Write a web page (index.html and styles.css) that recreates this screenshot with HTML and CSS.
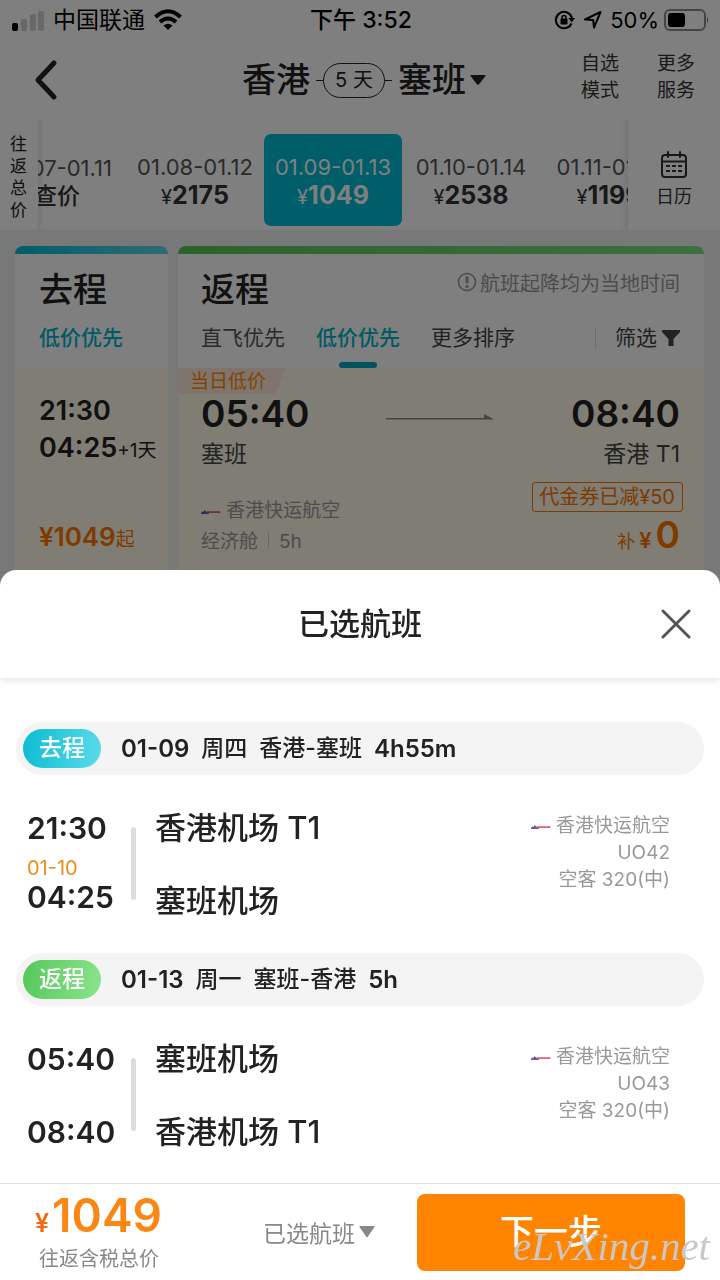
FILE: index.html
```html
<!DOCTYPE html>
<html lang="zh-CN">
<head>
<meta charset="utf-8">
<meta name="viewport" content="width=device-width, initial-scale=1">
<title>香港-塞班 航班</title>
<link rel="stylesheet" href="styles.css">
</head>
<body>
<svg class="defs" aria-hidden="true">
  <symbol id="airline" viewBox="0 0 20 8">
    <path d="M0 5.500 L1 3.500 L2.500 4 L3.500 2 L5 3.500 L7 5.500 Z" fill="#6a4fa8"/>
    <path d="M5.500 3.300h13.500l.7.900-.7.900H6z" fill="#e0566c"/>
    <path d="M0 5.400h8" stroke="#4a3f9a" stroke-width=".8"/>
    <path d="M9 3.600v1M12 3.600v1M15 3.600v1" stroke="#f6a6b4" stroke-width=".8"/>
  </symbol>
</svg>
<main class="page">
  <div class="status">
    <div class="status-left">
      <svg width="34" height="22" viewBox="0 0 34 22"><rect x="0" y="14" width="6" height="8" rx="2"/><g fill="#d0d0d0"><rect x="9" y="10" width="6" height="12" rx="2"/><rect x="18" y="5" width="6" height="17" rx="2"/><rect x="26" y="2" width="6" height="20" rx="2"/></g></svg>
      <span>中国联通</span>
      <svg class="wifi" width="28" height="22" viewBox="0 0 28 22"><g fill="none" stroke="#000" stroke-width="4"><path d="M1.500 8Q14-3.500 26.500 8"/><path d="M6 13Q14 6 22 13"/></g><path d="M9.500 16.500Q14 13 18.500 16.500L14 21Z"/></svg>
    </div>
    <time class="clock">下午 3:52</time>
    <div class="status-right">
      <svg width="22" height="20" viewBox="0 0 22 20"><path d="M17.500 13.500A8.200 8.200 0 1 1 18 8" fill="none" stroke="#000" stroke-width="2"/><path d="M14.500 8h6.500l-3.300 4.500z"/><rect x="6.500" y="8.500" width="7" height="6" rx="1"/><path d="M8 9V7.500a2 2 0 0 1 4 0V9" fill="none" stroke="#000" stroke-width="1.500"/></svg>
      <svg class="locate" width="20" height="20" viewBox="0 0 20 20"><path d="M2 9.500 17.500 2 11 17.500 10.200 10Z" fill="none" stroke="#000" stroke-width="2" stroke-linejoin="round"/></svg>
      <span>50%</span>
      <svg width="46" height="22" viewBox="0 0 46 22"><rect x="1" y="1" width="40" height="20" rx="5" fill="none" stroke="#8a8a8a" stroke-width="2"/><rect x="4" y="4" width="17" height="14" rx="3"/><path d="M43 7.500q2.500 3.500 0 7z" fill="#8a8a8a"/></svg>
    </div>
  </div>

  <header class="topbar">
    <button class="back" aria-label="返回"><svg width="26" height="42" viewBox="0 0 26 42"><path d="M21 4 5 21 21 38" fill="none" stroke="#222" stroke-width="5" stroke-linecap="round" stroke-linejoin="round"/></svg></button>
    <h1 class="route"><span>香港</span><i class="dash"></i><span class="days">5 天</span><i class="dash"></i><span>塞班</span><svg class="caret" width="16" height="10" viewBox="0 0 16 10"><path d="M1 0h14q1 0 .5 1L9 9.300q-1 1-2 0L.5 1Q0 0 1 0z" fill="#222"/></svg></h1>
    <div class="links"><a href="#">自选<br>模式</a><a href="#">更多<br>服务</a></div>
  </header>

  <section class="dates">
    <p class="total-label">往返总价</p>
    <div class="strip">
      <button class="date"><span>01.07-01.11</span><b class="check">查价</b></button>
      <button class="date"><span>01.08-01.12</span><b><small>¥</small>2175</b></button>
      <button class="date active"><span>01.09-01.13</span><b><small>¥</small>1049</b></button>
      <button class="date"><span>01.10-01.14</span><b><small>¥</small>2538</b></button>
      <button class="date"><span>01.11-01.15</span><b><small>¥</small>1199</b></button>
    </div>
    <button class="calendar"><svg width="28" height="28" viewBox="0 0 28 28"><g fill="none" stroke="#333" stroke-width="2"><rect x="2" y="4" width="24" height="22" rx="3"/><path d="M2 10.500h24M8 1v5M20 1v5" stroke-linecap="round"/><path d="M6 15h4M12 15h4M18 15h4M6 20h4M12 20h4M18 20h4"/></g></svg>日历</button>
  </section>

  <div class="cards">
    <section class="card outbound">
      <div class="card-head"><h2>去程</h2><p class="sort on">低价优先</p></div>
      <div class="card-body">
        <p class="time-sm">21:30</p>
        <p class="time-sm">04:25<small>+1天</small></p>
        <p class="from-price">¥1049<small>起</small></p>
      </div>
    </section>
    <section class="card inbound">
      <div class="card-head">
        <div class="row"><h2>返程</h2><p class="notice"><svg width="20" height="20" viewBox="0 0 20 20"><circle cx="10" cy="10" r="8.500" fill="none" stroke="#999" stroke-width="1.600"/><path d="M10 4.500v7" stroke="#999" stroke-width="3"/><circle cx="10" cy="14.500" r="1.600" fill="#999"/></svg>航班起降均为当地时间</p></div>
        <div class="row sorts">
          <button class="sort">直飞优先</button><button class="sort on tab">低价优先</button><button class="sort more">更多排序</button>
          <button class="sort filter">筛选<svg width="18" height="16" viewBox="0 0 18 16"><path d="M0 0h18v2l-6.500 7v7h-5V9L0 2z" fill="#444"/></svg></button>
        </div>
      </div>
      <div class="card-body">
        <span class="lowest">当日低价</span>
        <div class="row flight">
          <div><p class="time-lg">05:40</p><p class="city">塞班</p></div>
          <svg class="arrow" width="108" height="8" viewBox="0 0 108 8"><path d="M0 5h98V1l10 5.500H0z" fill="#888"/></svg>
          <div class="end"><p class="time-lg">08:40</p><p class="city">香港 T1</p></div>
        </div>
        <div class="row fare">
          <div class="carrier"><p><svg width="20" height="8"><use href="#airline"/></svg> 香港快运航空</p><p>经济舱<i class="sep"></i>5h</p></div>
          <div class="end"><span class="coupon">代金券已减¥50</span><p class="extra"><small>补</small><b>¥</b><strong>0</strong></p></div>
        </div>
      </div>
    </section>
  </div>
</main>
<div class="scrim"></div>

<section class="sheet" role="dialog" aria-labelledby="sheet-title">
  <header class="sheet-head"><h2 id="sheet-title">已选航班</h2><button class="close" aria-label="关闭"><svg width="30" height="30" viewBox="0 0 30 30"><path d="M2 2 28 28M28 2 2 28" stroke="#555" stroke-width="3" stroke-linecap="round"/></svg></button></header>
  <div class="legs">
    <article>
      <div class="leg-bar"><span class="tag go">去程</span><span class="latin">01-09</span><span>周四</span><span>香港-塞班</span><span class="latin">4h55m</span></div>
      <div class="leg">
        <div class="times"><time>21:30</time><small>01-10</small><time>04:25</time></div>
        <i class="track"></i>
        <div class="airports"><p>香港机场 T1</p><p>塞班机场</p></div>
        <div class="plane"><p><svg width="20" height="8"><use href="#airline"/></svg> 香港快运航空</p><p>UO42</p><p>空客 320(中)</p></div>
      </div>
    </article>
    <article>
      <div class="leg-bar"><span class="tag back-tag">返程</span><span class="latin">01-13</span><span>周一</span><span>塞班-香港</span><span class="latin">5h</span></div>
      <div class="leg">
        <div class="times spread"><time>05:40</time><time>08:40</time></div>
        <i class="track"></i>
        <div class="airports"><p>塞班机场</p><p>香港机场 T1</p></div>
        <div class="plane"><p><svg width="20" height="8"><use href="#airline"/></svg> 香港快运航空</p><p>UO43</p><p>空客 320(中)</p></div>
      </div>
    </article>
  </div>
  <footer class="pay">
    <div class="sum"><p class="amount"><small>¥</small>1049</p><p class="sum-note">往返含税总价</p></div>
    <button class="chosen">已选航班<svg width="16" height="12" viewBox="0 0 16 12"><path d="M1 0h14q1 0 .5 1L9 10.500q-1 1.500-2 0L.5 1Q0 0 1 0z" fill="#888"/></svg></button>
    <button class="next">下一步</button>
    <span class="watermark">eLvXing.net</span>
  </footer>
</section>
</body>
</html>
```

FILE: styles.css
```css
* { box-sizing: border-box; }
body {
  margin: 0;
  font-family: Inter, "Noto Sans CJK SC", sans-serif;
  font-size: 20px;
  color: #222;
  background: #fff;
}
h1, h2, p { margin: 0; font-weight: 500; }
button {
  padding: 0;
  border: 0;
  background: none;
  font: inherit;
  color: inherit;
  cursor: pointer;
}
a { color: inherit; text-decoration: none; }
svg { flex: none; }
.defs { position: absolute; width: 0; height: 0; }

.page {
  display: flex;
  flex-direction: column;
  height: 100vh;
  overflow: hidden;
  background: #fff;
}
.scrim { position: fixed; inset: 0; background: rgba(0, 0, 0, 0.5); }

/* status bar */
.status {
  display: grid;
  grid-template-columns: 1fr auto 1fr;
  align-items: center;
  height: 40px;
  padding: 0 10px 0 12px;
  font-size: 23px;
  line-height: 36px;
  color: #000;
}
.status-left, .status-right { display: flex; align-items: center; }
.status-left { gap: 7px; }
.wifi { margin-left: 2px; }
.status-right { justify-content: flex-end; gap: 5px; font-size: 22px; }
.locate { margin: 0 2px; }
.clock { font-weight: 500; }

/* title bar */
.topbar {
  display: grid;
  grid-template-columns: 1fr auto 1fr;
  align-items: center;
  flex: none;
  height: 80px;
  padding: 0 25px 0 33px;
}
.back { justify-self: start; display: flex; }
.route { display: flex; align-items: center; font-size: 34px; line-height: 50px; }
.dash { width: 7px; height: 1px; margin: 0 0 0 6px; background: #222; }
.days + .dash { margin: 0 6px 0 0; }
.days {
  padding: 0 11px;
  border: 1px solid #222;
  border-radius: 18px;
  font-size: 20px;
  line-height: 33px;
  font-weight: 400;
}
.caret { margin-left: 4px; }
.links {
  display: flex;
  justify-content: flex-end;
  gap: 38px;
  padding-bottom: 6px;
  font-size: 19px;
  line-height: 27px;
  color: #333;
}

/* date strip */
.dates {
  display: grid;
  grid-template-columns: 38px minmax(0, 1fr) 92px;
  flex: none;
  height: 110px;
}
.total-label {
  width: 17px;
  margin: 13px 0 0 10px;
  font-size: 17px;
  line-height: 22px;
  font-weight: 400;
}
.strip {
  display: flex;
  justify-content: center;
  padding: 14px 0 4px;
  overflow: hidden;
  box-shadow: inset 12px 0 10px -12px #ddd, inset -12px 0 10px -12px #ddd;
}
.date {
  flex: none;
  width: 138px;
  padding-top: 3px;
  border-radius: 7px;
  font-size: 22px;
  line-height: 28px;
  color: #555;
}
.date span, .date b { display: block; }
.date b { font-size: 25px; color: #333; }
.date small { font-size: 20px; font-weight: 400; }
.date .check { font-size: 23px; font-weight: 500; }
.date.active, .date.active b { color: #fff; }
.date.active { background: #00bcd4; }
.calendar {
  display: flex;
  flex-direction: column;
  align-items: center;
  justify-content: center;
  gap: 4px;
  padding-top: 12px;
  font-size: 18px;
  line-height: 28px;
  color: #333;
}

/* flight cards */
.cards {
  display: grid;
  grid-template-columns: 153px minmax(0, 1fr);
  gap: 10px;
  flex: 1;
  padding: 16px 16px 0 15px;
  background: #f0f0f3;
}
.card { display: flex; flex-direction: column; padding-top: 8px; border-radius: 8px 8px 0 0; }
.outbound { background: linear-gradient(90deg, #00bcd4, #60d8e8); }
.inbound { background: linear-gradient(90deg, #55c558, #7ae080); }
.card-head { height: 114px; padding: 11px 24px 0; background: #fff; }
.card-head h2 { font-size: 34px; line-height: 50px; }
.card-body { flex: 1; padding: 24px 24px 0; background: #fffbe8; }
.row { display: flex; justify-content: space-between; }
.sort { font-size: 21px; line-height: 46px; color: #555; }
.sort.on { color: #00b4cc; font-weight: 500; }
.sort.more, .sort.filter { color: #444; }
.sorts { justify-content: flex-start; gap: 31px; }
.tab { position: relative; }
.tab::after {
  content: "";
  position: absolute;
  left: 50%;
  bottom: -7px;
  width: 38px;
  height: 6px;
  margin-left: -19px;
  border-radius: 3px;
  background: #00a5bd;
}
.filter { display: flex; align-items: center; gap: 5px; margin-left: auto; }
.filter::before { content: ""; width: 1px; height: 22px; margin-right: 14px; background: #ddd; }
.notice { display: flex; align-items: center; gap: 3px; height: 34px; font-size: 20px; font-weight: 400; color: #999; }
.time-sm { font-size: 27px; line-height: 37px; font-weight: 600; white-space: nowrap; }
.time-sm small { font-size: 19px; font-weight: 400; }
.from-price { margin-top: 50px; font-size: 26px; line-height: 36px; font-weight: 600; color: #ff7500; white-space: nowrap; }
.from-price small { font-size: 19px; font-weight: 400; }
.inbound .card-head, .inbound .card-body { padding-left: 23px; }
.inbound .card-body { position: relative; }
.lowest {
  position: absolute;
  top: 0;
  left: 0;
  padding: 2px 20px 0 12px;
  background: #ffeadb;
  clip-path: polygon(0 0, 100% 0, calc(100% - 11px) 100%, 0 100%);
  font-size: 19px;
  line-height: 24px;
  color: #ff8a00;
}
.end { text-align: right; }
.time-lg { font-size: 37px; line-height: 44px; font-weight: 600; }
.city { font-size: 23px; line-height: 36px; font-weight: 400; color: #444; }
.arrow { margin-top: 21px; }
.fare { margin-top: 10px; }
.carrier { padding-top: 13px; line-height: 31px; color: #999; }
.carrier p, .plane p { font-weight: 400; }
.carrier svg, .plane svg { vertical-align: middle; }
.carrier p { font-size: 19px; }
.sep { display: inline-block; width: 1px; height: 16px; margin: 0 10px; background: #ccc; }
.coupon {
  display: inline-block;
  margin-right: -3px;
  padding: 1px 7px 0 6px;
  border: 1px solid #ff7500;
  border-radius: 3px;
  font-size: 20px;
  line-height: 27px;
  color: #ff7500;
}
.extra { line-height: 46px; color: #ff7500; }
.extra small { font-size: 18px; font-weight: 400; }
.extra b { margin: 0 4px; font-size: 22px; font-weight: 600; }
.extra strong { font-size: 37px; font-weight: 600; }

/* selected flights sheet */
.sheet {
  position: fixed;
  left: 0;
  right: 0;
  bottom: 0;
  border-radius: 16px 16px 0 0;
  background: #fff;
  overflow: hidden;
}
.sheet-head {
  display: grid;
  grid-template-columns: 1fr auto 1fr;
  align-items: center;
  height: 108px;
  padding: 0 29px;
  box-shadow: 0 2px 8px rgba(0, 0, 0, 0.12);
}
.sheet-head h2 { grid-column: 2; font-size: 31px; line-height: 46px; }
.close { display: flex; justify-self: end; }
.legs { padding: 44px 16px 0; }
.leg-bar {
  display: flex;
  align-items: center;
  gap: 12px;
  height: 53px;
  padding-left: 7px;
  border-radius: 27px;
  background: #f4f4f4;
  font-size: 23px;
  line-height: 39px;
  font-weight: 500;
}
.leg-bar .latin { font-size: 24px; font-weight: 600; }
.tag {
  margin-right: 8px;
  padding: 0 16px;
  border-radius: 20px;
  color: #fff;
}
.go { background: linear-gradient(100deg, #0bbcd3, #5cdbea); }
.back-tag { background: linear-gradient(100deg, #55c85a, #8be58b); }
.leg {
  display: grid;
  grid-template-columns: 98px 5px 1fr auto;
  padding: 35px 34px 34px 11px;
  gap: 6px;
}
article:last-child .leg { padding-bottom: 33px; }
.times { display: flex; flex-direction: column; font-size: 30px; line-height: 36px; font-weight: 600; }
.times small { margin-top: 11px; font-size: 20px; line-height: 22px; font-weight: 400; color: #f08c1e; }
.spread { justify-content: space-between; }
.track { height: 73px; margin-top: 17px; border-radius: 3px; background: #ddd; }
.airports { display: flex; flex-direction: column; gap: 37px; padding-left: 13px; font-size: 31px; line-height: 36px; }
.airports p { font-weight: 500; }
.plane { padding-top: 2px; font-size: 19px; line-height: 27px; text-align: right; color: #999; }

/* payment bar */
.pay {
  position: relative;
  display: flex;
  align-items: center;
  height: 97px;
  padding: 0 35px;
  border-top: 1px solid #ddd;
}
.sum { flex: 1; }
.amount { font-size: 46px; line-height: 46px; font-weight: 600; color: #fa8714; }
.amount small { margin-right: 3px; font-size: 25px; color: #f26a10; }
.sum-note { padding: 0 4px; font-size: 20px; line-height: 26px; font-weight: 400; color: #888; }
.chosen { display: flex; align-items: center; gap: 4px; margin-right: 42px; font-size: 23px; color: #888; }
.next {
  width: 268px;
  height: 77px;
  padding-bottom: 6px;
  border-radius: 8px;
  background: #ff8400;
  font-size: 34px;
  font-weight: 500;
  color: #fff;
}
.watermark {
  position: absolute;
  right: 10px;
  bottom: 12px;
  font: italic 41px/44px "Liberation Serif", serif;
  color: #c8c8c8;
  pointer-events: none;
}
```
